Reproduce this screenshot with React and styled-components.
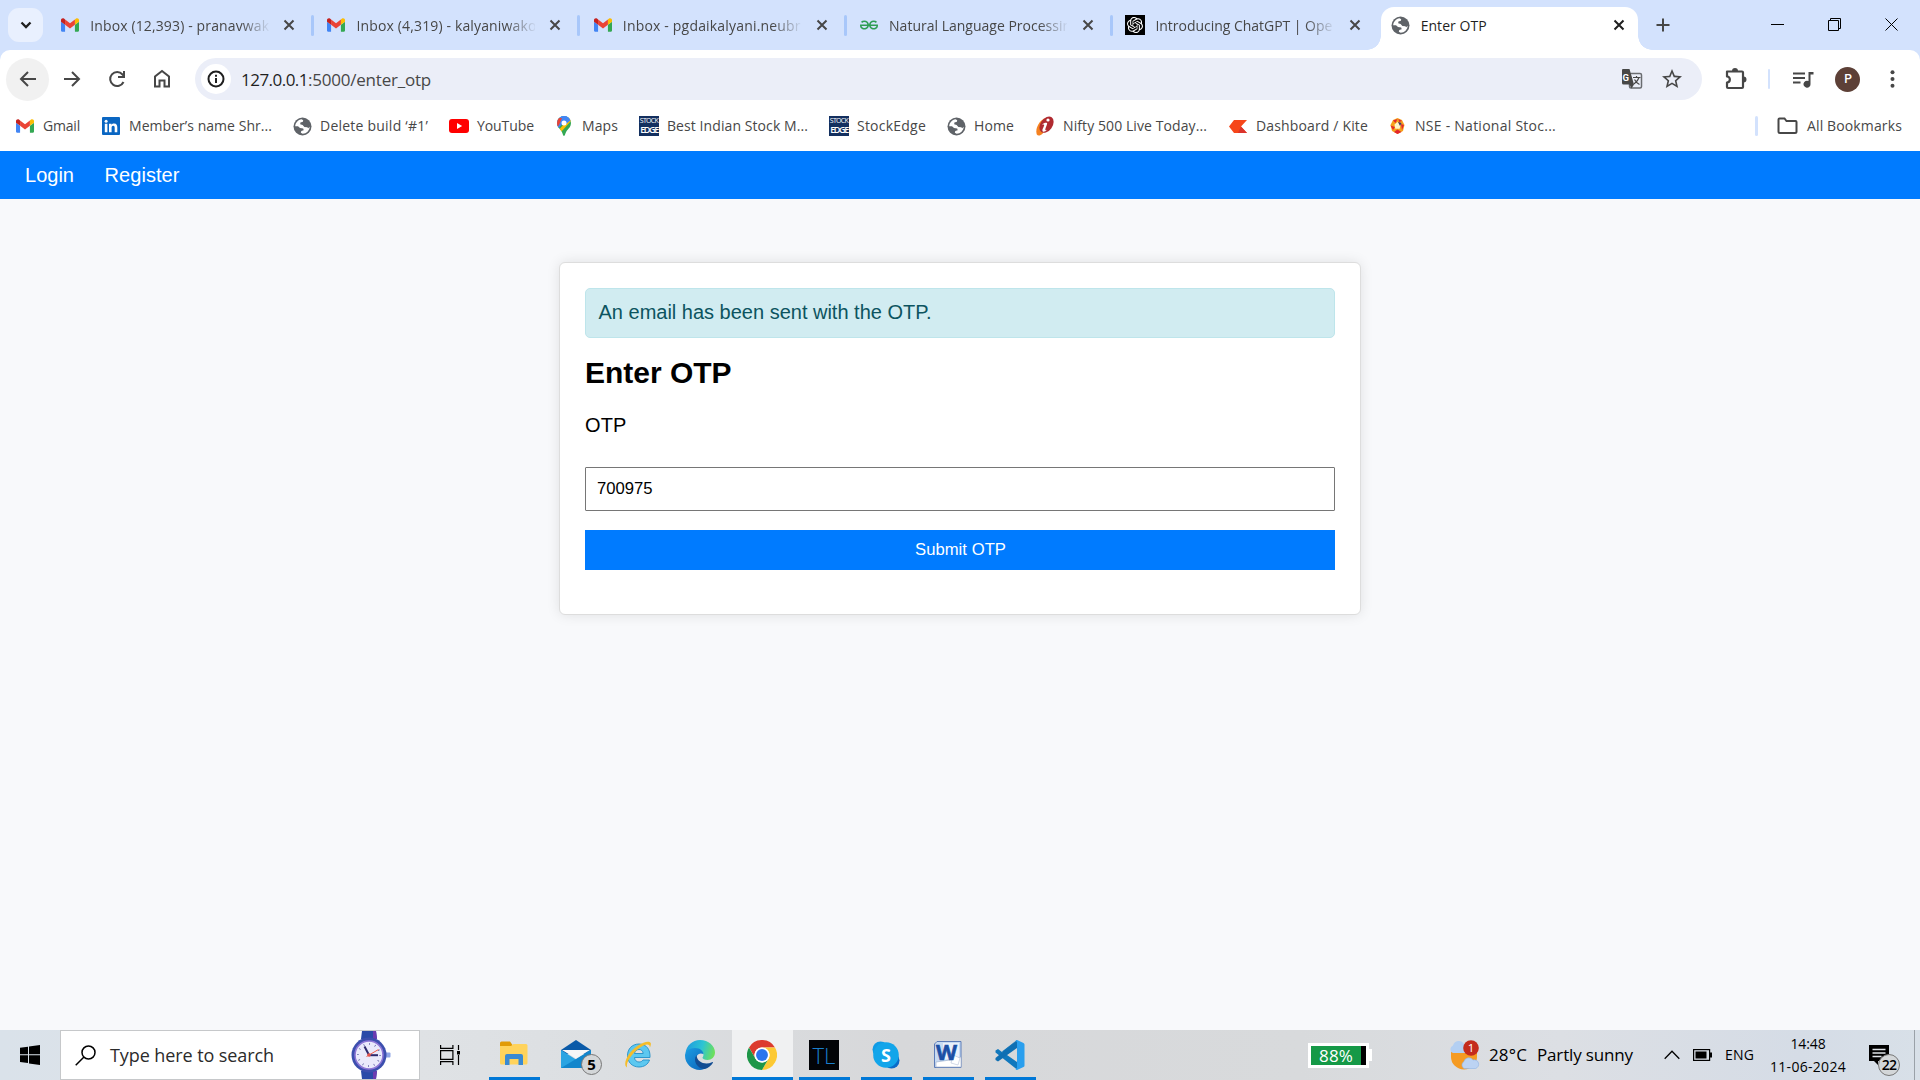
import React, { useLayoutEffect, useRef } from "react";
import styled, { createGlobalStyle } from "styled-components";
import { SiOpenai, SiGeeksforgeeks } from "react-icons/si";

const UI = `"Open Sans", "Noto Sans", sans-serif`;

const GlobalStyle = createGlobalStyle`
  * { box-sizing: border-box; }
  body { margin: 0; overflow: hidden; }
  svg { display: block; flex: none; }
`;

const Screen = styled.div`
  width: 1920px; height: 1080px; display: flex; flex-direction: column;
  font-family: ${UI}; color: #474747; overflow: hidden;
`;

/* ---------- text that is tracked to fill a given width ---------- */
const FitText = styled.span`
  display: inline-block; white-space: pre; flex: none;
`;
function Fit({ w, children }) {
  const ref = useRef(null);
  useLayoutEffect(() => {
    const el = ref.current;
    el.style.letterSpacing = "0px";
    const natural = el.getBoundingClientRect().width;
    el.style.letterSpacing = `${(w - natural) / children.length}px`;
  }, [w, children]);
  return <FitText ref={ref}>{children}</FitText>;
}

/* ---------- tab strip ---------- */
const TabStrip = styled.div`
  height: 50px; flex: none; background: #d3e2fd; display: flex; align-items: center;
  padding-left: 8px;
`;
const TabSearch = styled.div`
  width: 35px; height: 34px; border-radius: 11px; background: #e9f0fe; margin-right: 4.7px;
  display: flex; align-items: center; justify-content: center;
`;
const Tab = styled.div`
  width: 266.3px; height: 50px; flex: none; display: flex; align-items: center; padding-left: 12.5px;
`;
const TabTitle = styled.div`
  width: 179px; margin-left: 10px; overflow: hidden; white-space: nowrap; font-size: 14px; line-height: 20px; padding-top: 1px;
  mask-image: ${(p) => (p.$fade ? "linear-gradient(to right, #000 84%, transparent 101%)" : "none")};
  color: ${(p) => (p.$fade ? "#474747" : "#1f1f1f")};
`;
const TabClose = styled.div`
  width: 20px; margin-left: 10.5px; display: flex; justify-content: center;
`;
const TabRule = styled.div`
  width: 3px; height: 21px; border-radius: 2px; background: #a8c7fa; margin-left: 12px;
`;
const IconBox = styled.div`
  width: 20px; height: 22px; flex: none; display: flex; align-items: center; justify-content: center;
`;
const ActiveTab = styled.div`
  position: relative; width: 257px; height: 43px; align-self: flex-end; margin-left: 2px;
  background: #fff; border-radius: 13px 13px 0 0; display: flex; align-items: center;
  padding: 0 0 7px 9.5px;
  &::before, &::after {
    content: ""; position: absolute; bottom: 0; width: 14px; height: 14px;
  }
  &::before { left: -14px; background: radial-gradient(circle at 0 0, transparent 13.5px, #fff 14px); }
  &::after { right: -14px; background: radial-gradient(circle at 100% 0, transparent 13.5px, #fff 14px); }
`;
const ActiveClose = styled(TabClose)` margin-left: 9px; `;
const NewTab = styled.div`
  width: 20px; margin-left: 15px; display: flex; justify-content: center;
`;
const WindowControls = styled.div`
  margin-left: auto; display: flex; height: 50px; align-items: center;
`;
const WindowButton = styled.div`
  width: 57px; display: flex; justify-content: center; padding-bottom: 1px;
`;

/* ---------- toolbar ---------- */
const Chrome = styled.div` height: 101px; flex: none; background: #d3e2fd; `;
const ChromeInner = styled.div`
  height: 101px; background: #fff; border-radius: 10px 10px 0 0; display: flex; flex-direction: column;
`;
const Toolbar = styled.div`
  height: 58px; padding: 0 0 0 6px; display: flex; align-items: center;
`;
const NavButton = styled.div`
  width: 43px; height: 43px; border-radius: 50%; margin-right: 1.8px; flex: none;
  background: ${(p) => (p.$on ? "#f1f1f1" : "transparent")};
  display: flex; align-items: center; justify-content: center;
`;
const Omnibox = styled.div`
  width: 1507px; height: 42px; border-radius: 21px; margin-left: 9.8px; background: #ebeef8;
  display: flex; align-items: center; padding-left: 6px;
`;
const InfoDisc = styled.div`
  width: 30px; height: 30px; border-radius: 50%; background: #fff; margin-right: 10px;
  display: flex; align-items: center; justify-content: center;
`;
const Url = styled.div`
  font-size: 17px; line-height: 24px; color: #474747; flex: 1; display: flex; padding-top: 1px;
`;
const Host = styled.span` color: #1f1f1f; `;
const OmniActions = styled.div` display: flex; align-items: center; gap: 18px; margin-right: 19px; `;
const ToolbarRight = styled.div` display: flex; align-items: center; flex: 1; padding-left: 23.5px; `;
const Rule = styled.div`
  width: ${(p) => p.$w}px; height: 20px; background: #d3e2fd; border-radius: 2px; margin: 0 ${(p) => p.$r}px 0 ${(p) => p.$l}px;
`;
const Avatar = styled.div`
  width: 25px; height: 25px; border-radius: 50%; background: #5d4037; color: #fff; margin: 0 30px 0 21px;
  font: 500 12px/25px Roboto, sans-serif; text-align: center;
`;
const Bookmarks = styled.div`
  height: 36px; display: flex; align-items: center; padding-left: 15px; font-size: 14px; line-height: 20px;
`;
const Bookmark = styled.div`
  width: ${(p) => p.$w}px; flex: none; display: flex; align-items: center; gap: 8px;
`;
const AllBookmarks = styled.div` margin-left: auto; display: flex; align-items: center; gap: 9px; padding-right: 18px; `;
const StockEdge = styled.div`
  width: 20px; height: 20px; background: #14305f; color: #fff; display: flex; flex-direction: column;
  align-items: center; justify-content: center; font: 7px/8px "Open Sans", sans-serif; letter-spacing: -0.7px;
`;
const StockEdgeBase = styled.span` font: 600 9px/10px "Open Sans", sans-serif; letter-spacing: -1.4px; `;

/* ---------- web page ---------- */
const Page = styled.main`
  height: 879px; flex: none; background: #f8f9fb; font-family: Arial, "Liberation Sans", sans-serif; color: #000;
`;
const Nav = styled.nav`
  height: 48px; background: #007bff; color: #fff; font-size: 20px; display: flex; gap: 30.5px; line-height: 48px; padding-left: 25px;
`;
const Card = styled.section`
  width: 802px; height: 353px; margin: 63px auto 0; border: 1px solid #ddd; border-radius: 6px; background: #fff;
  padding: 25px; box-shadow: 0 0 12.5px rgba(0, 0, 0, 0.1);
`;
const Alert = styled.div`
  height: 50px; border: 1px solid #bee5eb; border-radius: 5px; background: #d1ecf1; color: #0c5460;
  font-size: 20px; line-height: 47px; padding-left: 12.5px;
`;
const Heading = styled.h2` margin: 17px 0 0; font-size: 30px; line-height: 36px; font-weight: 700; `;
const FieldLabel = styled.label` display: block; margin-top: 22px; font-size: 20px; line-height: 24px; `;
const Field = styled.input`
  display: block; width: 100%; height: 44px; margin: 30px 0 0; padding: 0 11px; border: 1px solid #767676; border-radius: 1px;
  background: #fff; font: 16.67px Arial, "Liberation Sans", sans-serif; color: #000; outline: none;
`;
const Submit = styled.button`
  display: block; width: 100%; height: 40px; margin: 19px 0 0; padding: 0 0 1px 1px; border: 0; background: #007bff; color: #fff;
  font: 16.67px Arial, "Liberation Sans", sans-serif;
`;

/* ---------- taskbar ---------- */
const Taskbar = styled.footer`
  height: 50px; flex: none; display: flex; color: #000;
  background: linear-gradient(90deg, #dae2ea 0, #dfe2e5 420px, #dcdfe2 600px, #d7d8da 900px, #d8dadc 1300px, #dcdfe4 1560px, #d5dce6 1800px, #d8e0e8 1920px);
`;
const Start = styled.div` width: 60px; display: flex; align-items: center; padding-left: 20px; `;
const Search = styled.div`
  width: 360px; height: 50px; background: #fff; border: 1px solid #c6c8ca; display: flex; align-items: center; padding-left: 14px;
  font-size: 18px; line-height: 26px; color: #2b2b2b;
`;
const SearchText = styled.div` width: 255px; flex: none; padding-left: 14px; `;
const TaskView = styled.div` width: 60px; display: flex; align-items: center; justify-content: center; `;
const TaskButton = styled.div`
  position: relative; width: 62px; height: 50px; flex: none; display: flex; align-items: center; justify-content: center;
  &::before {
    content: ""; position: absolute; inset: 0 0.5px; background: ${(p) => (p.$active ? "#f0f1f2" : "transparent")};
  }
  &::after {
    content: ""; position: absolute; bottom: 0; height: 3px; left: ${(p) => (p.$active ? 0.5 : 6)}px; right: ${(p) => (p.$active ? 0.5 : 5)}px;
    background: ${(p) => (p.$open ? "#0078d7" : "transparent")};
  }
  > * { position: relative; }
`;
const Apps = styled.div` display: flex; margin-left: 3px; `;
const TL = styled.div`
  width: 30px; height: 30px; background: #020407; color: #1b80cc; font: 300 22px/31px "Open Sans", sans-serif;
  text-align: center;
`;
const CountBadge = styled.div`
  && { position: absolute; }
  right: ${(p) => p.$r}px; top: ${(p) => p.$t}px; width: 21px; height: 21px; border: 1px solid #777; border-radius: 50%;
  background: #d3d6d8; color: #000; font: 700 15px/19px ${UI}; text-align: center;
`;
const Tray = styled.div` margin-left: auto; display: flex; align-items: center; height: 50px; `;
const Battery = styled.div`
  width: 61px; height: 25px; border: 3px solid #fff; background: #000; display: flex;
`;
const BatteryNub = styled.div` width: 3px; height: 12px; background: #fff; margin-right: 77px; `;
const BatteryFill = styled.div`
  width: 50px; height: 19px; background: #159947; color: #fff; font-size: 17px; line-height: 19px; text-align: center;
`;
const Weather = styled.div` display: flex; align-items: center; font-size: 17px; line-height: 26px; width: 215px; `;
const WeatherIcon = styled.div` width: 40px; margin-top: -1px; `;
const Degrees = styled.div` width: 48px; `;
const TrayItem = styled.div` width: ${(p) => p.$w}px; font-size: 14px; line-height: 20px; flex: none; `;
const Clock = styled.div`
  width: 76px; display: flex; flex-direction: column; align-items: center; font-size: 14px; line-height: 23px; margin-right: 23px;
`;
const Notifications = styled.div` position: relative; width: 45px; height: 50px; padding-top: 15px; `;
const NoteBadge = styled(CountBadge)` left: 9px; width: 22px; height: 22px; font: 600 14px/20px ${UI}; letter-spacing: -0.7px; `;
const Desktop = styled.div` width: 6px; height: 50px; border-left: 1px solid #9aa1a8; `;

/* ---------- drawings ---------- */
const CloseIcon = ({ color = "#474747" }) => (
  <svg width="12" height="12" viewBox="0 0 12 12"><path d="M1.5 1.5l9 9M10.5 1.5l-9 9" stroke={color} strokeWidth="2" /></svg>
);
const Gmail = () => (
  <svg width="18" height="14" viewBox="52 42 88 66">
    <path fill="#4285f4" d="M58 108h14V74L52 59v43c0 3.32 2.69 6 6 6" />
    <path fill="#34a853" d="M120 108h14c3.32 0 6-2.69 6-6V59l-20 15" />
    <path fill="#fbbc04" d="M120 48v26l20-15v-8c0-7.42-8.47-11.65-14.4-7.2" />
    <path fill="#ea4335" d="M72 74V48l24 18 24-18v26L96 92" />
    <path fill="#c5221f" d="M52 51v8l20 15V48l-5.6-4.2c-5.94-4.45-14.4-.22-14.4 7.2" />
  </svg>
);
const Globe = () => (
  <svg width="19" height="19" viewBox="0 0 19 19">
    <circle cx="9.5" cy="9.5" r="9" fill="#5f6368" />
    <path d="M2.2 9.3C2.3 5.8 5 2.8 8.6 2.3L10.2 3.2 9.9 4.7 7.4 5.6 7.2 7.3 9.6 7.9 11.4 10 14.3 10.2 15.2 11.3 16.7 9.8C16.5 13.6 13.5 16.7 9.7 16.8L7.8 15.8 8.3 14 10.7 13.3 10.2 11.4 7 11 5 9.2Z" fill="#fff" />
  </svg>
);
const LinkedIn = () => (
  <svg width="18" height="18" viewBox="0 0 18 18">
    <rect width="18" height="18" rx="1" fill="#0a66c2" />
    <circle cx="4.1" cy="4.2" r="1.5" fill="#fff" />
    <path d="M2.8 6.8h2.6v8.4H2.8zM7 6.8h2.5v1.1c.5-.8 1.4-1.3 2.6-1.3 2.6 0 3.2 1.7 3.2 4v4.6h-2.6V11c0-1.100-.1-2.300-1.500-2.300S9.600 9.800 9.600 11v4.200H7z" fill="#fff" />
  </svg>
);
const YouTube = () => (
  <svg width="20" height="14" viewBox="0 0 20 14"><rect width="20" height="14" rx="3" fill="#f00" /><path d="M8 4l5.200 3L8 10z" fill="#fff" /></svg>
);
const Maps = () => (
  <svg width="14" height="20" viewBox="0 0 14 20">
    <defs><clipPath id="pin"><path d="M7 0a7 7 0 0 1 7 7c0 3.500-2 5-4 7.500C8.500 16.500 8 20 7 20s-1.500-3.500-3-5.500C2 12 0 10.500 0 7a7 7 0 0 1 7-7z" /></clipPath></defs>
    <g clipPath="url(#pin)">
      <rect width="14" height="20" fill="#34a853" />
      <path d="M0 13.500L14 0H0z" fill="#4285f4" /><path d="M0 0h5L2 7l-2 3z" fill="#ea4335" transform="translate(0 2)" />
      <path d="M2 13.800L14 0v5L4 16z" fill="#fbbc04" /><path d="M4 0h10v4L9 8z" fill="#4285f4" />
    </g>
    <circle cx="7" cy="7" r="2.500" fill="#fff" />
  </svg>
);
const Nifty = () => (
  <svg width="20" height="20" viewBox="0 0 20 20">
    <path d="M9 2.500C3.500 6 0 13 1.800 18.500c1 1.800 3.700 1.300 5.700-.7L16 5z" fill="#f58220" />
    <ellipse cx="11.500" cy="8.700" rx="6" ry="9" transform="rotate(35 11.500 8.700)" fill="#b02a30" />
    <circle cx="13" cy="4" r="1.600" fill="#fff" /><path d="M7 8.500c2-1.800 4-2.200 5-1.500.8.700-1.500 4.500-1.700 6.500-.1 1 .8.800 1.700.3-1.500 2-4.600 2.800-4.600.6 0-1.700 2-4.800 1.800-5.500-.2-.6-1.200-.4-2.200-.4z" fill="#fff" />
  </svg>
);
const Kite = () => (
  <svg width="18" height="13" viewBox="0 0 18 13"><path d="M5 0h13l-6 6.500L18 13H5L0 6.500z" fill="#f6461a" /><path d="M12 6.500L18 13h-9z" fill="#db342c" /></svg>
);
const Nse = () => (
  <svg width="17" height="18" viewBox="0 0 17 18">
    <path d="M8.500 1l4.500 2 2.500 5-1.500 6-5.500 3-5.500-3L1.500 8 4 3z" fill="#f6a11c" />
    <path d="M4 3.500L8.500 2l-2 4zM1.500 8.500L4 13l2-3zM5 15l3.500 2 4-2-4-2.500zM13 13l2-5-3-1zM13 4L9.500 2l.5 3z" fill="#e2272e" />
    <path d="M8.500 5l3 2.500-.8 4.200H6.300L5.500 7.500z" fill="#fff4c8" /><path d="M9 5l3.500 1L11 9z" fill="#3b3470" />
  </svg>
);
const Folder = () => (
  <svg width="21" height="18" viewBox="0 0 21 18"><path d="M1.500 14.500v-12q0-1 1-1h5l2 2.500h9q1 0 1 1v9.500q0 1.500-1.500 1.500H3q-1.500 0-1.500-1.500z" fill="none" stroke="#474747" strokeWidth="2" /></svg>
);
const Stroke = ({ s = 20, d, w = 2, color = "#474747", children }) => (
  <svg width={s} height={s} viewBox={`0 0 ${s} ${s}`} fill="none" stroke={color} strokeWidth={w}><path d={d} />{children}</svg>
);
const Translate = () => (
  <svg width="22" height="22" viewBox="0 0 22 22">
    <rect x="8.500" y="5.500" width="12" height="14.500" rx="1.500" fill="#ebeef8" stroke="#6a6c70" strokeWidth="1.500" />
    <path d="M2 1h6.500l4.500 15.500H2.500Q1 16.500 1 15V2q0-1 1-1zM8.500 16.500H13l-2.500 4z" fill="#474747" />
    <text x="1.500" y="13" fontSize="9.500" fontWeight="700" fill="#fff" fontFamily="Roboto, sans-serif">G</text>
    <path d="M12 9.500h7.500M15.500 8v1.500M18 9.500c-.8 3-3 5-5 6.500M13.500 11.500c1 2 3 4 5 5" fill="none" stroke="#474747" strokeWidth="1.200" />
  </svg>
);
const Puzzle = () => (
  <svg width="22" height="22" viewBox="0 0 22 22">
    <path d="M2 3.500h15q1 0 1 1v14.500q0 1-1 1H3q-1 0-1-1v-4.500c3.800-.3 3.800-5.700 0-6z" fill="none" stroke="#474747" strokeWidth="2.200" strokeLinejoin="round" />
    <path d="M7 3a3 3 0 0 1 6 0zM18.500 8.500a3 3 0 0 1 0 6z" fill="#474747" />
  </svg>
);
const Watch = () => (
  <svg width="40" height="48" viewBox="0 0 40 48">
    <path d="M11 0h14l1 8H10zM10 40h16l-1 8H11z" fill="#2a4ba8" /><path d="M22 0h3l1 8h-4zM22 40h4l-1 8h-3z" fill="#6c3bb0" />
    <rect x="33" y="21.500" width="6.500" height="5" rx="1" fill="#8fa5e6" />
    <circle cx="18" cy="24" r="17.500" fill="#3c4fae" /><circle cx="18" cy="24" r="14" fill="#eaeafb" stroke="#8d76d6" strokeWidth="1.500" />
    <circle cx="18" cy="24" r="11" fill="none" stroke="#55589b" strokeWidth="2" strokeDasharray=".7 5.060" />
    <path d="M18 24L13.500 15.500" stroke="#2d2a6d" strokeWidth="2" /><path d="M18 24.200h9" stroke="#2d2a6d" strokeWidth="2" /><path d="M15.500 25.500l12-7" stroke="#f0604d" strokeWidth="1" /><circle cx="18" cy="24" r="1.800" fill="#e5534b" />
  </svg>
);
const Explorer = () => (
  <svg width="30" height="28" viewBox="0 0 30 28">
    <path d="M1 2q0-1.500 1.500-1.500H11L13.500 4H28v4H1z" fill="#e19b06" /><path d="M1 5h11l2.500-2H27q1.500 0 1.500 1.500V22q0 1.500-1.500 1.500H2.500Q1 23.500 1 22z" fill="#ffd35c" />
    <path d="M6 24v-9q0-2 2-2h14q2 0 2 2v9h-4.500v-6h-9v6z" fill="#3a8ad3" />
  </svg>
);
const Mail = () => (
  <svg width="30" height="30" viewBox="0 0 30 30">
    <path d="M0 10L15 0l15 10v4H0z" fill="#0a5aa8" />
    <path d="M0 10l15 9.500L30 10v18H0z" fill="#2aa4e2" /><path d="M0 28L30 10v18z" fill="#1286cc" /><path d="M1 10h28L15 18.500z" fill="#f7f7f7" />
  </svg>
);
const IE = () => (
  <svg width="30" height="30" viewBox="0 0 30 30">
    <path d="M16 4C9 4 4.500 9 4.500 15.500S9 27 16 27c5 0 9-2.500 10.500-7h-6.500c-1 1.500-2.300 2-4 2-2.600 0-4.300-1.800-4.500-4.500H27C27.500 9.500 23.500 4 16 4zm-4.500 9.500c.4-2.500 2.200-4 4.500-4s4 1.500 4.200 4z" fill="#5cc8f0" stroke="#2290c8" strokeWidth=".9" />
    <path d="M4 27.500C-1 24.500 5 12 15 5.500c6-4 11.500-5 12.700-2.500.5 1.200 0 3-.9 5 .2-2.500-.6-3.600-2.800-3.500C17 5 2.500 19 4 27.500z" fill="#f5bd2a" />
  </svg>
);
const Edge = () => (
  <svg width="30" height="30" viewBox="0 0 30 30">
    <defs>
      <linearGradient id="edgeTop" x1="0" y1=".3" x2="1" y2=".5"><stop offset="0" stopColor="#1f9be0" /><stop offset=".55" stopColor="#2cc4d3" /><stop offset="1" stopColor="#6ee05a" /></linearGradient>
      <linearGradient id="edgeLeft" x1="0" y1="0" x2="1" y2="1"><stop offset="0" stopColor="#1b9de3" /><stop offset="1" stopColor="#0b62b8" /></linearGradient>
    </defs>
    <path d="M.5 13C1.500 5.500 7.500 0 15 0c8.500 0 15 6 15 12.500 0 4.500-3.500 7.500-7.500 7.500-3 0-5-1.200-5-2.200 0-.6 1-1.300 1-3 0-2.500-2.500-5.300-6.500-5.300C6 9.500 2 12 .5 13z" fill="url(#edgeTop)" />
    <path d="M0 15.500C0 11 4.500 8 10 8c5 0 8.500 3 8.500 6.300-1.500-1.300-5.500-1.500-7 2.200-2 5 2 11 8 11.500 1 0 2-.2 2.500-.4C19.500 29.300 17.500 30 15 30 6.500 30 0 23.500 0 15.500z" fill="url(#edgeLeft)" />
    <path d="M11.500 15c-4 5.500.5 13.500 8 14 3.500-.8 6.500-3 8.300-6 .4-.8-.2-1.200-.9-.8C21 25 12 23 11.500 15z" fill="#124d93" />
  </svg>
);
const ChromeLogo = () => (
  <svg width="30" height="30" viewBox="0 0 48 48">
    <circle cx="24" cy="24" r="24" fill="#fff" />
    <path d="M3.200 12A24 24 0 0 1 44.800 12H24a12 12 0 0 0-10.400 18z" fill="#dc3b2e" />
    <path d="M44.800 12A24 24 0 0 1 24 48L34.400 30A12 12 0 0 0 24 12z" fill="#fcc934" />
    <path d="M24 48A24 24 0 0 1 3.200 12L13.600 30a12 12 0 0 0 20.800 0z" fill="#1e9648" />
    <circle cx="24" cy="24" r="12" fill="#fff" /><circle cx="24" cy="24" r="9.500" fill="#2b75ee" />
  </svg>
);
const Skype = () => (
  <svg width="30" height="30" viewBox="0 0 30 30">
    <circle cx="9.500" cy="9.500" r="8" fill="#0f9be6" /><circle cx="20.500" cy="20.500" r="8" fill="#0a6cc8" /><circle cx="15" cy="15" r="12.800" fill="#12a5ea" />
    <text x="15" y="21.500" fontSize="18" fontWeight="700" fill="#fff" textAnchor="middle" fontFamily="Open Sans, sans-serif">S</text>
  </svg>
);
const Word = () => (
  <svg width="30" height="30" viewBox="0 0 30 30">
    <path d="M4 1.500h24v26H1.500V4z" fill="#c8dbf3" stroke="#5c7cb8" /><path d="M10 3h16v14L10 20z" fill="#eaf1fb" />
    <path d="M3 22l14-2 11-3v10H3z" fill="#fff" stroke="#9badcb" strokeWidth=".6" /><path d="M20 15l7 3-2 7-7-2z" fill="#fff" stroke="#b3bfd6" strokeWidth=".6" />
    <text x="13.500" y="20" fontSize="21" fontWeight="700" fill="#1b4fa5" stroke="#1b4fa5" strokeWidth=".6" textAnchor="middle" fontFamily="Open Sans, sans-serif" textLength="21" lengthAdjust="spacingAndGlyphs">W</text>
  </svg>
);
const Code = () => (
  <svg width="30" height="30" viewBox="0 0 30 30">
    <path d="M22 0L8 12.700 3 9 .5 10.500v2L22 29.500V22L7 11.500z" fill="#1178bd" />
    <path d="M22 0L.5 18v2L3 21.500 22 8z" fill="#0f6fb3" />
    <path d="M22 0l6.500 3q1 .5 1 1.500v21q0 1-1 1.500L22 30q-1 0-1.500-1l1.500-1V2l-1.500-1q.5-1 1.500-1z" fill="#2a9fee" />
  </svg>
);
const WeatherSun = () => (
  <svg width="31" height="32" viewBox="0 0 31 32">
    <path d="M2 10h26v8a13 12.500 0 0 1-26 0z" fill="#f59b23" />
    <path d="M4 14a4 4 0 0 1 0-7.500A6 6 0 0 1 15 5a4.500 4.500 0 0 1 2 9z" fill="#b3cff2" /><path d="M15 29.500a4 4 0 0 1 0-7 5 5 0 0 1 9-1.500 4 4 0 0 1 2.500 8.500z" fill="#bcd3f3" stroke="#8fb4e6" strokeWidth=".6" />
    <circle cx="22" cy="9" r="7.800" fill="#c42b1c" />
    <text x="22" y="13" fontSize="11.500" fill="#fff" textAnchor="middle" fontFamily="Open Sans, sans-serif">1</text>
  </svg>
);
const StockEdgeIcon = () => <StockEdge><span>STOCK</span><StockEdgeBase>EDGE</StockEdgeBase></StockEdge>;
const Tile = styled.div` width: 20px; height: 20px; background: #000; display: flex; align-items: center; justify-content: center; `;
const OpenAiIcon = () => <Tile><SiOpenai size={16} color="#fff" /></Tile>;

const tabs = [
  { icon: <Gmail />, title: "Inbox (12,393) - pranavwak", w: 179 },
  { icon: <Gmail />, title: "Inbox (4,319) - kalyaniwako", w: 180 },
  { icon: <Gmail />, title: "Inbox - pgdaikalyani.neubr", w: 178 },
  { icon: <SiGeeksforgeeks size={18} color="#2f9e55" />, title: "Natural Language Processin", w: 182 },
  { icon: <OpenAiIcon />, title: "Introducing ChatGPT | Ope", w: 177, last: true },
];
const bookmarks = [
  [86, <Gmail />, "Gmail", 37],
  [191, <LinkedIn />, "Member’s name Shr...", 143],
  [157, <Globe />, "Delete build ‘#1’", 108],
  [105, <YouTube />, "YouTube", 57],
  [85, <Maps />, "Maps", 36],
  [190, <StockEdgeIcon />, "Best Indian Stock M...", 141],
  [117, <StockEdgeIcon />, "StockEdge", 69],
  [89, <Globe />, "Home", 40],
  [193, <Nifty />, "Nifty 500 Live Today...", 144],
  [159, <Kite />, "Dashboard / Kite", 112],
  [168, <Nse />, "NSE - National Stoc...", 141],
];

export default function App() {
  return (
    <Screen>
      <GlobalStyle />
      <TabStrip>
        <TabSearch><Stroke s={12} d="M1.500 3.500L6 8l4.500-4.500" w={2.300} color="#1f1f1f" /></TabSearch>
        {tabs.map((t) => (
          <Tab key={t.title}>
            <IconBox>{t.icon}</IconBox>
            <TabTitle $fade><Fit w={t.w}>{t.title}</Fit></TabTitle>
            <TabClose><CloseIcon /></TabClose>
            {t.last ? null : <TabRule />}
          </Tab>
        ))}
        <ActiveTab>
          <IconBox><Globe /></IconBox>
          <TabTitle><Fit w={66}>Enter OTP</Fit></TabTitle>
          <ActiveClose><CloseIcon color="#1f1f1f" /></ActiveClose>
        </ActiveTab>
        <NewTab><Stroke s={14} d="M7 .5v13M.5 7h13" /></NewTab>
        <WindowControls>
          <WindowButton><svg width="13" height="13"><path d="M0 6.500h13" stroke="#000" /></svg></WindowButton>
          <WindowButton><svg width="13" height="13" fill="none" stroke="#000"><path d="M.5 2.500h10v10h-10zM2.500 2V.5h10v10H11" /></svg></WindowButton>
          <WindowButton><svg width="13" height="13"><path d="M.5.5l12 12M12.500.5l-12 12" stroke="#000" /></svg></WindowButton>
        </WindowControls>
      </TabStrip>

      <Chrome>
        <ChromeInner>
          <Toolbar>
            <NavButton $on><Stroke s={18} d="M17 9H2.500M9 2L2 9l7 7" /></NavButton>
            <NavButton><Stroke s={18} d="M1 9h14.500M9 2l7 7-7 7" /></NavButton>
            <NavButton><Stroke s={18} d="M15.500 12A7 7 0 1 1 14.500 4.500L16 6.500M16 1v6h-6" /></NavButton>
            <NavButton><Stroke s={20} d="M3 17.500V7.500l7-5.500 7 5.500v10h-4.500v-6h-5v6z" /></NavButton>
            <Omnibox>
              <InfoDisc><Stroke s={18} d="M9 8v5M9 4.800v2" w={2} color="#1f1f1f"><circle cx="9" cy="9" r="7.500" /></Stroke></InfoDisc>
              <Url><Host><Fit w={67}>127.0.0.1</Fit></Host><Fit w={123}>:5000/enter_otp</Fit></Url>
              <OmniActions>
                <Translate />
                <svg width="22" height="22" viewBox="1 1 22 22"><path fill="#474747" d="M22 9.240l-7.190-.62L12 2 9.190 8.630 2 9.240l5.460 4.730L5.820 21 12 17.270 18.180 21l-1.630-7.030L22 9.240zM12 15.400l-3.760 2.270 1-4.280-3.320-2.880 4.380-.38L12 6.100l1.710 4.040 4.380.38-3.320 2.880 1 4.280L12 15.400z" /></svg>
              </OmniActions>
            </Omnibox>
            <ToolbarRight>
              <Puzzle />
              <Rule $w={2} $l={21} $r={23} />
              <svg width="21" height="17" viewBox="0 0 21 17"><path d="M0 2.500h12M0 7h12M0 11.500h7.500" stroke="#474747" strokeWidth="2" /><path d="M15.500 1h5v2.500h-3v9.500a3.500 3.500 0 1 1-2-3z" fill="#474747" /></svg>
              <Avatar>P</Avatar>
              <svg width="5" height="18" viewBox="0 0 5 18" fill="#474747"><circle cx="2.500" cy="2.200" r="2" /><circle cx="2.500" cy="9" r="2" /><circle cx="2.500" cy="15.800" r="2" /></svg>
            </ToolbarRight>
          </Toolbar>
          <Bookmarks>
            {bookmarks.map(([w, icon, name, tw]) => (
              <Bookmark key={name} $w={w}><IconBox>{icon}</IconBox><Fit w={tw}>{name}</Fit></Bookmark>
            ))}
            <AllBookmarks><Rule $w={3} $l={0} $r={10} /><Folder /><Fit w={95}>All Bookmarks</Fit></AllBookmarks>
          </Bookmarks>
        </ChromeInner>
      </Chrome>

      <Page>
        <Nav><Fit w={49}>Login</Fit><Fit w={75}>Register</Fit></Nav>
        <Card>
          <Alert><Fit w={333}>An email has been sent with the OTP.</Fit></Alert>
          <Heading><Fit w={146.5}>Enter OTP</Fit></Heading>
          <FieldLabel><Fit w={41.5}>OTP</Fit></FieldLabel>
          <Field defaultValue="700975" />
          <Submit><Fit w={91}>Submit OTP</Fit></Submit>
        </Card>
      </Page>

      <Taskbar>
        <Start><svg width="20" height="20" viewBox="0 0 20 20"><path d="M0 2.800L8 1.700v7.600H0zM9 1.500L20 0v9.300H9zM0 10.300h8v7.700l-8-1.100zM9 10.300h11V20L9 18.400z" /></svg></Start>
        <Search>
          <svg width="21" height="21" viewBox="0 0 21 21" fill="none" stroke="#000" strokeWidth="1.500"><circle cx="13.500" cy="7.500" r="6.500" /><path d="M9 12L.7 20.300" /></svg>
          <SearchText><Fit w={164}>Type here to search</Fit></SearchText>
          <Watch />
        </Search>
        <TaskView><svg width="20" height="20" viewBox="0 0 20 20" fill="none" stroke="#000" strokeWidth="1.200"><path d="M.6 0v3.400h12.300V0M.6 20v-3.400h12.300V20M.6 5.600h12.300v8.800H.6zM18.500 0v5M18.500 10v10" /><path d="M17 6h3v3.500h-3z" fill="#000" stroke="none" /></svg></TaskView>
        <Apps>
          <TaskButton $open><Explorer /></TaskButton>
          <TaskButton><Mail /><CountBadge $r={5} $t={24}>5</CountBadge></TaskButton>
          <TaskButton><IE /></TaskButton>
          <TaskButton><Edge /></TaskButton>
          <TaskButton $open $active><ChromeLogo /></TaskButton>
          <TaskButton $open><TL>TL</TL></TaskButton>
          <TaskButton $open><Skype /></TaskButton>
          <TaskButton $open><Word /></TaskButton>
          <TaskButton $open><Code /></TaskButton>
        </Apps>
        <Tray>
          <Battery><BatteryFill><Fit w={34}>88%</Fit></BatteryFill></Battery>
          <BatteryNub />
          <Weather>
            <WeatherIcon><WeatherSun /></WeatherIcon>
            <Degrees><Fit w={38}>28°C</Fit></Degrees>
            <Fit w={96}>Partly sunny</Fit>
          </Weather>
          <TrayItem $w={29}><svg width="16" height="10" viewBox="0 0 16 10" fill="none" stroke="#000" strokeWidth="1.300"><path d="M.7 8.700L8 1.300l7.300 7.400" /></svg></TrayItem>
          <TrayItem $w={32}><svg width="19" height="12" viewBox="0 0 19 12"><rect x=".6" y=".6" width="16" height="10.800" fill="none" stroke="#000" strokeWidth="1.200" /><path d="M2.500 2.500h11v7h-11zM17 3.500h2v5h-2z" /></svg></TrayItem>
          <TrayItem $w={45}><Fit w={29}>ENG</Fit></TrayItem>
          <Clock><Fit w={35}>14:48</Fit><Fit w={76}>11-06-2024</Fit></Clock>
          <Notifications>
            <svg width="20" height="20" viewBox="0 0 20 20"><path d="M0 0h20v16H9v4l-4-4H0z" /><path d="M3.500 4.500h13M3.500 8h13M3.500 11.500h9" stroke="#dfe3e8" strokeWidth="1.300" /></svg>
            <NoteBadge $t={24}>22</NoteBadge>
          </Notifications>
          <Desktop />
        </Tray>
      </Taskbar>
    </Screen>
  );
}
